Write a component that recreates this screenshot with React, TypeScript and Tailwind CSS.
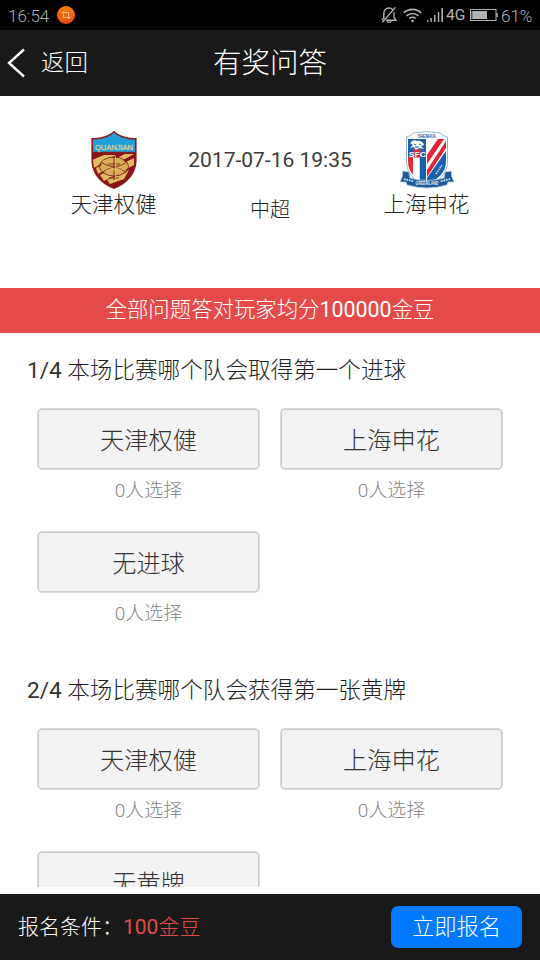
import React from 'react';

interface Option {
  label: string;
  count?: string;
}

interface Question {
  title: string;
  index: string;
  options: Option[];
}

const QUESTIONS: Question[] = [
  {
    index: '1/4',
    title: '本场比赛哪个队会取得第一个进球',
    options: [
      { label: '天津权健', count: '0人选择' },
      { label: '上海申花', count: '0人选择' },
      { label: '无进球', count: '0人选择' },
    ],
  },
  {
    index: '2/4',
    title: '本场比赛哪个队会获得第一张黄牌',
    options: [
      { label: '天津权健', count: '0人选择' },
      { label: '上海申花', count: '0人选择' },
      { label: '无黄牌' },
    ],
  },
];

const StatusBar: React.FC = () => (
  <div className="h-[30px] shrink-0 bg-black flex items-center justify-between pl-[8px] pr-[7px] text-[#b2b2b2]">
    <div className="flex items-center gap-[7px]">
      <span className="w-[42px] text-[17px] leading-[30px] pt-[2px]">16:54</span>
      <svg width="18" height="18" viewBox="0 0 18 18" fill="none">
        <defs>
          <linearGradient id="app" x1="0" y1="0" x2="0" y2="1">
            <stop offset="0" stopColor="#f78010" />
            <stop offset="1" stopColor="#e84912" />
          </linearGradient>
        </defs>
        <circle cx="9" cy="9" r="9" fill="url(#app)" />
        <path d="M6.5 5V11.500H13.500M4.500 6.500H11.500V13" stroke="#ffc9a0" strokeWidth="0.8" />
      </svg>
    </div>
    <div className="flex items-center">
      <svg width="16" height="18" viewBox="0 0 16 18" fill="none" stroke="#b2b2b2" strokeWidth="1.4">
        <path d="M2.8 12.6V7.4C2.8 4.2 5 2 8 2c1.500 0 2.800.6 3.700 1.600M13 6.200v5l2 3H5M1 14.200l1.800-2.400M6 15.200c.4 1.600 3.800 1.600 4.200 0M14.400 1.400L1.400 16.200" />
      </svg>
      <svg className="ml-[6px]" width="19" height="16" viewBox="0 0 19 16" fill="none" stroke="#b2b2b2" strokeWidth="1.600">
        <path d="M.8 5.800c5-4.600 12.400-4.600 17.400 0M3.600 8.800c3.500-3.100 8.300-3.100 11.800 0M6.300 11.500c2-1.600 4.400-1.600 6.400 0" />
        <circle cx="9.500" cy="14" r="1.300" fill="#b2b2b2" stroke="none" />
      </svg>
      <svg className="ml-[5px]" width="17" height="15" viewBox="0 0 17 15" fill="#b2b2b2">
        <path d="M0 12h1.300v2H0zM3.500 10h1.400v4H3.500zM7 7h1.500v7H7zM10.800 4h1.500v10h-1.500zM14.400 0H16v14h-1.600z" />
      </svg>
      <span className="ml-[2px] w-[19px] text-[15.500px] leading-[30px] font-normal">4G</span>
      <svg className="ml-[5px]" width="28" height="12" viewBox="0 0 28 12" fill="none">
        <rect x="0.5" y="0.5" width="25.500" height="11" stroke="#b2b2b2" />
        <rect x="1" y="2" width="2" height="8" fill="#555" />
        <rect x="2.500" y="2" width="14.500" height="8" fill="#b2b2b2" />
        <rect x="26.300" y="4" width="1.500" height="4" fill="#b2b2b2" />
      </svg>
      <span className="ml-[3px] w-[32px] text-[17px] leading-[30px] pt-[2px]">61%</span>
    </div>
  </div>
);

const QuanjianBadge: React.FC = () => (
  <svg width="48" height="60" viewBox="0 0 48 60">
    <defs>
      <clipPath id="quanjian">
        <path d="M24 2.500C18 8 10.500 9.500 3 9.500V30C3 43 12 53 24 57.500 36 53 45 43 45 30V9.500C37.500 9.500 30 8 24 2.500z" />
      </clipPath>
    </defs>
    <path d="M24 .8C18 6.500 10 8 1.400 8V30c0 14 10 24.500 22.600 29C36.600 54.500 46.600 44 46.600 30V8C38 8 30 6.500 24 .8z" fill="#8c1a20" />
    <g clipPath="url(#quanjian)">
      <rect width="48" height="22" fill="#20a0da" />
      <rect y="22" width="48" height="38" fill="#8a1518" />
      <path d="M2 30l12-5h12l-22 13zM6 38l29-14h9L8 44zM10 45l34-17v7L14 51zM17 50l22-10-5 9-14 5z" fill="#e0bb62" />
      <ellipse cx="24" cy="36.500" rx="13" ry="9" fill="#d9ac58" />
      <g fill="none" stroke="#7a2417" strokeWidth="0.900">
        <ellipse cx="24" cy="36.500" rx="14.500" ry="9.500" />
        <path d="M24 27v23M18 34h12M11 32c8 6 18 6 26 0M12 43c7-7 17-7 24 0M19 48h10" />
      </g>
      <g fill="none" stroke="#e0bb62" strokeWidth="0.9">
        <path d="M25.500 26v22M14 35c7 5 14 5 20 0M16 40h16" />
      </g>
    </g>
    <path d="M2 22.300h44" stroke="#7b252b" />
    <text x="24" y="19.500" textAnchor="middle" textLength="38" lengthAdjust="spacingAndGlyphs" fontFamily="Liberation Sans, sans-serif" fontSize="8" fontWeight="400" stroke="#d5d38b" strokeWidth="0.3" fill="#d5d38b">QUANJIAN</text>
  </svg>
);

const ShenhuaBadge: React.FC = () => (
  <svg width="56" height="58" viewBox="0 0 56 58">
    <defs>
      <clipPath id="shenhua">
        <path d="M9 7q4-1 6-3.500Q28 .500 41 3.500 43 6 47 7v23c0 12-8 18-19 23C17 48 9 42 9 30z" />
      </clipPath>
    </defs>
    <path d="M7.500 6q5-1 7-4Q28-.8 41.500 2q2 3 7 4v24c0 13-8 20-20.500 25C15.500 50 7.500 43 7.500 30z" fill="#fff" stroke="#83b2d8" strokeWidth="0.900" />
    <g clipPath="url(#shenhua)">
      <path d="M9 8h18v18H9z" fill="#205fae" />
      <path d="M20.500 26H27v28h-6.500z" fill="#1761ad" />
      <path d="M14.500 26h6v26h-6z" fill="#fff" />
      <path d="M9 26h5v20H9z" fill="#e62b38" />
      <path d="M28 24L39 8h6L28 33zM28 39L47 10v7L28 46z" fill="#e32333" />
      <path d="M28 53V47L47 20v29z" fill="#1761ad" />
    </g>
    <path d="M11 12q3-4 7-2 5-1 7 4l-3 1 3 3-5-1-3 3-2-4-4 1 3-3z" fill="#fff" />
    <path d="M15 13l2 1M20 13l2 1M16 16h4" stroke="#205fae" />
    <rect x="15" y="18.500" width="6.500" height="8" fill="#e62b38" />
    <text x="18.300" y="25.500" textAnchor="middle" textLength="17" lengthAdjust="spacingAndGlyphs" fontFamily="Liberation Sans, sans-serif" fontSize="7.500" fontWeight="700" fill="#fff">SFC</text>
    <text x="28" y="6.500" textAnchor="middle" textLength="18" lengthAdjust="spacingAndGlyphs" fontFamily="Liberation Sans, sans-serif" fontSize="4.500" fontWeight="700" fill="#1f5ca6">SHENHUA</text>
    <path d="M37 43l6-9" stroke="#c9d8ed" strokeWidth="1.600" strokeDasharray="1.500 .8" />
    <path d="M3.500 40l6.500 1 1 6q17 5 34 0l1-6 6.500-1 0 5 2.500 6-6 0-1 3q-20 6-40 0l-1-3-6 0 2.500-6z" fill="#1d5b9e" stroke="#b6cbe2" strokeWidth="0.800" />
    <path d="M5 48l10 2.500M51 48l-10 2.500" stroke="#e7eff8" strokeWidth="1.800" strokeDasharray="1.500 1" />
    <text x="28" y="54" textAnchor="middle" textLength="23" lengthAdjust="spacingAndGlyphs" fontFamily="Liberation Sans, sans-serif" fontSize="4.800" fontWeight="700" fill="#e5eff9">GREENLAND</text>
  </svg>
);

const OptionItem: React.FC<Option> = ({ label, count }) => (
  <div className="flex flex-col items-center">
    <button className="w-[223px] h-[62px] border border-[#dadada] shadow-[inset_0_0_0_1px_#cbcbcb] rounded-[5px] bg-[#f3f3f3] text-[24.200px] text-[#333] flex items-center justify-center pt-[5px]">
      {label}
    </button>
    {count && <span className="h-[40px] leading-[42px] text-[19px] text-[#888]">{count}</span>}
  </div>
);

export default function App() {
  return (
    <div className="w-[540px] h-[960px] flex flex-col overflow-hidden bg-white font-light text-[#222] font-['Roboto','Noto_Sans_CJK_SC',sans-serif]">
      <StatusBar />

      <header className="h-[66px] shrink-0 bg-[#191919] text-white grid grid-cols-[1fr_auto_1fr] items-center">
        <button className="flex items-center pl-[7px] text-[23.500px]">
          <svg width="19" height="30" viewBox="0 0 19 30" fill="none" stroke="#fff" strokeWidth="2.400">
            <path d="M17 1.500L2 15l15 13.500" />
          </svg>
          <span className="ml-[15px] pt-[2px]">返回</span>
        </button>
        <h1 className="text-[28.500px] pt-[2px]">有奖问答</h1>
      </header>

      <section className="h-[192px] shrink-0 flex justify-between px-[70px] pt-[34px]">
        <div className="w-[87px] flex flex-col items-center">
          <QuanjianBadge />
          <span className="text-[21.500px] leading-[30px] whitespace-nowrap">天津权健</span>
        </div>
        <div className="flex flex-col items-center pt-[15px]">
          <span className="text-[21px] leading-[30px] font-normal text-[#3c3c3c]">2017-07-16 19:35</span>
          <span className="mt-[20px] text-[20px] leading-[30px]">中超</span>
        </div>
        <div className="w-[87px] flex flex-col items-center">
          <div className="h-[60px] pt-[1px]">
            <ShenhuaBadge />
          </div>
          <span className="text-[21.500px] leading-[30px] whitespace-nowrap">上海申花</span>
        </div>
      </section>

      <div className="h-[45px] shrink-0 bg-[#e44a4a] text-white text-[21.400px] leading-[43px] text-center">
        全部问题答对玩家均分<span className="font-normal">100000</span>金豆
      </div>

      <main className="flex-1 min-h-0 overflow-hidden mb-[7px]">
        {QUESTIONS.map((q) => (
          <section key={q.index} className="mb-[20px]">
            <h2 className="h-[75px] leading-[75px] pl-[27px] text-[22.600px]">
              <span className="font-normal text-[#333]">{q.index}</span> {q.title}
            </h2>
            <div className="grid grid-cols-[223px_223px] gap-x-[20px] gap-y-[21px] pl-[37px]">
              {q.options.map((option) => (
                <OptionItem key={option.label} {...option} />
              ))}
            </div>
          </section>
        ))}
      </main>

      <footer className="h-[66px] shrink-0 bg-[#191919] flex items-center justify-between px-[18px] text-white">
        <p className="text-[21px] pt-[2px]">
          报名条件：<span className="text-[#e44a4a]"><span className="font-normal">100</span>金豆</span>
        </p>
        <button className="w-[131px] h-[42px] rounded-[7px] bg-[#0079ff] text-[22.300px] pt-[2px]">立即报名</button>
      </footer>
    </div>
  );
}
